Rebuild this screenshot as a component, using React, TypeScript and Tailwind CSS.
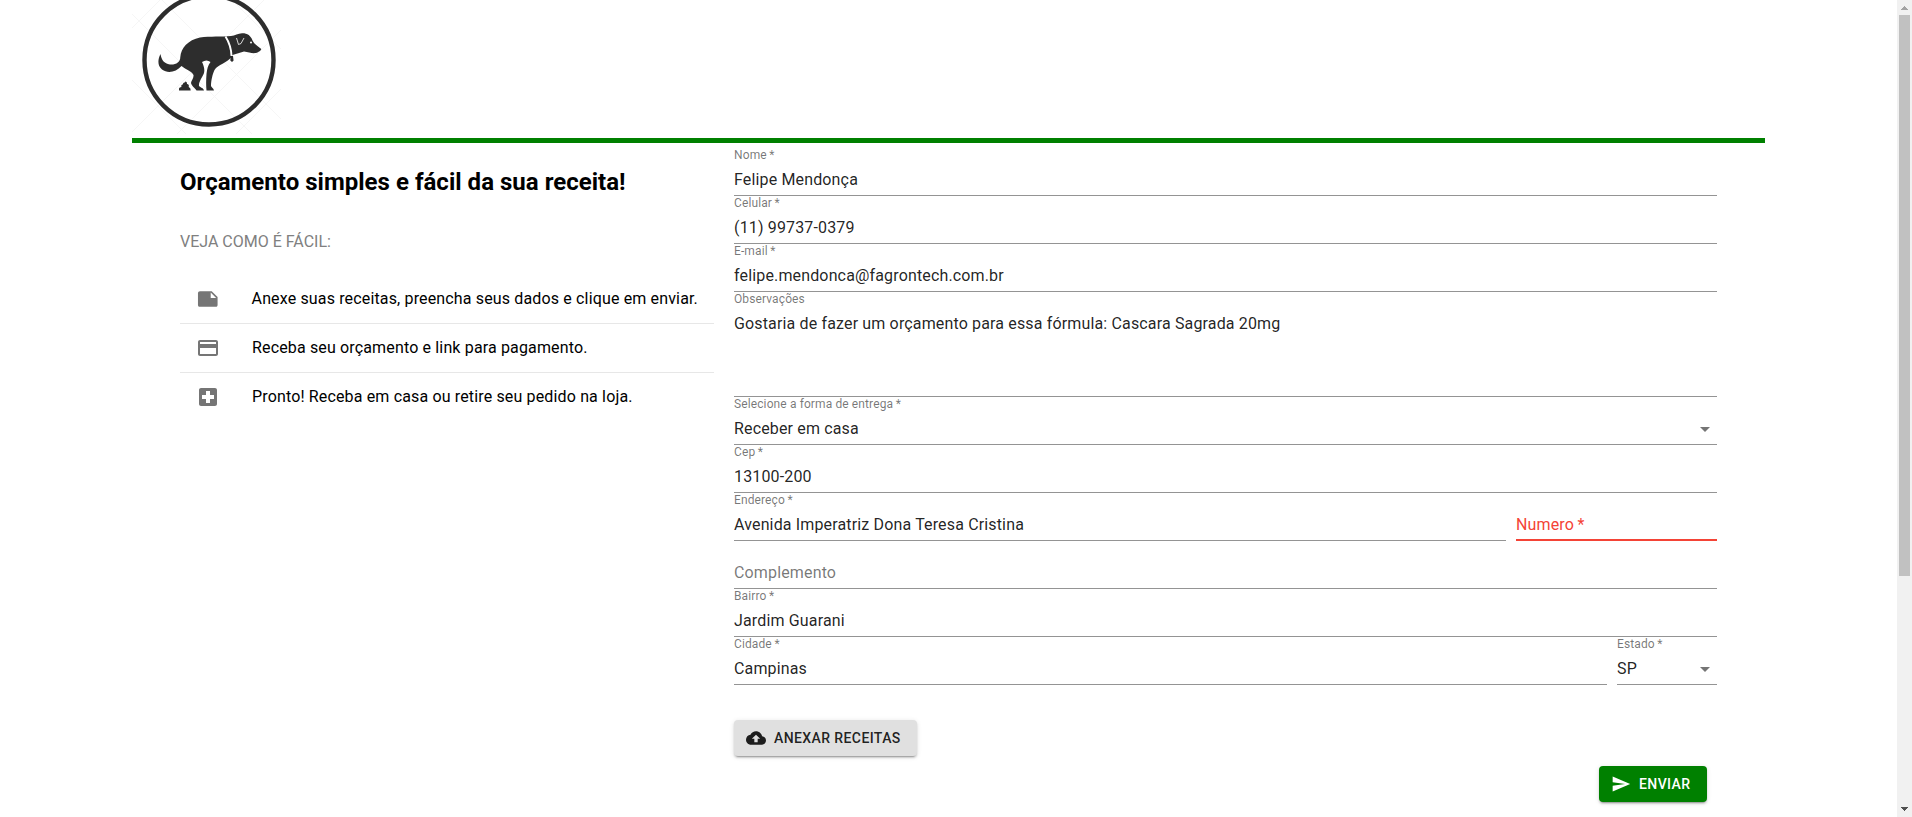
import React from "react";

const inputText = "text-[16px] leading-[19px] tracking-[0.00938em] text-black/87";

type FieldProps = {
  label: string;
  value?: string;
  className?: string;
  bodyClass?: string;
  select?: boolean;
  error?: boolean;
  required?: boolean;
};

function Field({ label, value, className = "", bodyClass = "h-8", select, error, required }: FieldProps) {
  const shrunk = value !== undefined;
  return (
    <div className={`relative flex flex-col pt-4 ${className}`}>
      <label
        className={`absolute left-0 top-0 origin-top-left whitespace-nowrap text-[16px] leading-4 tracking-[0.00938em] ${
          shrunk ? "translate-y-[1.5px] scale-75" : "translate-y-6"
        } ${error ? "text-[#f44336]" : "text-black/54"}`}
      >
        {label}
        {required && "\u2009*"}
      </label>
      <div
        className={`flex items-start justify-between pt-[6px] ${bodyClass} ${
          error ? "border-b-2 border-[#f44336]" : "border-b border-black/42"
        }`}
      >
        <span className={inputText}>{value}</span>
        {select && (
          <svg viewBox="0 0 24 24" className="-mt-[2px] size-6 fill-black/54">
            <path d="M7 10l5 5 5-5z" />
          </svg>
        )}
      </div>
    </div>
  );
}

const steps = [
  {
    text: "Anexe suas receitas, preencha seus dados e clique em enviar.",
    path: "M22 10l-6-6H4c-1.1 0-2 .9-2 2v12.01c0 1.1.9 1.99 2 1.99l16-.01c1.1 0 2-.89 2-1.99v-8zm-7-4.5l5.5 5.5H15V5.5z",
  },
  {
    text: "Receba seu orçamento e link para pagamento.",
    path: "M20 4H4c-1.11 0-1.99.89-1.99 2L2 18c0 1.11.89 2 2 2h16c1.11 0 2-.89 2-2V6c0-1.11-.89-2-2-2zm0 14H4v-6h16v6zm0-10H4V6h16v2z",
  },
  {
    text: "Pronto! Receba em casa ou retire seu pedido na loja.",
    path: "M19 3H5c-1.1 0-1.99.9-1.99 2L3 19c0 1.1.9 2 2 2h14c1.1 0 2-.9 2-2V5c0-1.1-.9-2-2-2zm-1 11h-4v4h-4v-4H6v-4h4V6h4v4h4v4z",
  },
];

function Logo() {
  return (
    <svg viewBox="0 0 150 138" className="h-[138px] w-[150px]">
      <g stroke="#f6f6f6" strokeWidth="1" fill="none">
        <path d="M0 28L28 0M0 132L132 0M45 134L149 30M104 134L149 89M0 14L120 134M30 0L149 119M100 0L149 49M0 80L54 134" />
      </g>
      <circle cx="77" cy="60" r="64.5" fill="none" stroke="#2d2d2d" strokeWidth="4.4" />
      <path
        fill="#2d2d2d"
        d="M28.5 54C25.5 60 25.500 66 30 69.500C36 74 44 72 49.500 66C54 70 60 71 61.500 75C62 78 59 81 59 83C59.500 86 63 88 64.500 90.500H72C71.500 88 68.500 87.500 67 86C66.500 82 70.500 77 72 73C73 69 71.500 65 70 62C73 60 76 60 78.500 62C76 65 75 69 74.500 74C74 80 74 86 74.500 90.500H82C81.500 88 79.500 87.500 79 86C79 81 80.500 74 82.500 70C86 64.500 95 63 99.500 57L100.500 55L112 51.500C117 52.500 121 53.800 125 52.800C127.500 51.500 129 50.500 129.300 49C126 46.500 122.500 44.500 120.500 40.500C119 35.500 115 33 110 33.200C106 33.500 103 35.500 99 36C90 37 78 36 68 37.500C56 40 49 48 48.300 57C48.300 62 44 65 38 64.500C32 63.500 29.500 60 28.500 54Z"
      />
      <path d="M93.500 36.500C97 42 99.200 48 99.500 56" fill="none" stroke="#fff" strokeWidth="1.900" />
      <path d="M104.500 38L106.500 44.500L109 43.500L112 38" fill="none" stroke="#fff" strokeWidth=".8" />
      <circle cx="119" cy="42.500" r="1" fill="#fff" />
      <path d="M98.500 56H101L101.600 60.500L100 62L98.300 60.500Z" fill="#2d2d2d" />
      <path d="M47 90.500V88.500Q47.200 87.300 49.500 87Q48.500 84.800 51 84.200Q50.700 82.500 52.500 82.500Q53.700 82.200 53.500 81.200Q55.500 82.500 55 84Q57.500 84.500 56.700 86.900Q58.800 87.500 58.700 90.500Z" fill="#2d2d2d" />
    </svg>
  );
}

export default function App() {
  return (
    <div className="flex h-[817px] w-full overflow-hidden bg-white font-[Roboto,sans-serif] text-black">
      <div className="flex-1">
        <main className="ml-[132px] w-[1633px]">
          <header className="h-[143px] border-b-[5px] border-[#008000]">
            <Logo />
          </header>
          <div className="flex pl-12 pt-[5px]">
            <section className="w-[534px]">
              <h2 className="mt-5 text-[24px] font-bold leading-7 tracking-[0.02px]">
                Orçamento simples e fácil da sua receita!
              </h2>
              <p className="mt-9 text-[16px] leading-[19px] text-[#808080]">VEJA COMO É FÁCIL:</p>
              <ul className="mt-6">
                {steps.map((step) => (
                  <li
                    key={step.text}
                    className="flex h-[49px] items-center border-b border-[#e7e7e7] px-4 last:h-12 last:border-b-0"
                  >
                    <svg viewBox="0 0 24 24" className="mr-8 size-6 fill-black/54">
                      <path d={step.path} />
                    </svg>
                    <span className="whitespace-nowrap text-[16px] leading-6 tracking-[0.00938em]">{step.text}</span>
                  </li>
                ))}
              </ul>
            </section>
            <form className="ml-5 w-[983px]">
              <Field label="Nome" required value="Felipe Mendonça" />
              <Field label="Celular" required value="(11) 99737-0379" />
              <Field label="E-mail" required value="felipe.mendonca@fagrontech.com.br" />
              <Field
                label="Observações"
                value="Gostaria de fazer um orçamento para essa fórmula: Cascara Sagrada 20mg"
                bodyClass="h-[89px]"
              />
              <Field label="Selecione a forma de entrega" required value="Receber em casa" select />
              <Field label="Cep" required value="13100-200" />
              <div className="flex gap-[10px]">
                <Field label="Endereço" required value="Avenida Imperatriz Dona Teresa Cristina" className="flex-1" />
                <Field label="Numero" required error className="w-[201px]" />
              </div>
              <Field label="Complemento" />
              <Field label="Bairro" required value="Jardim Guarani" />
              <div className="flex gap-[10px]">
                <Field label="Cidade" required value="Campinas" className="flex-1" />
                <Field label="Estado" required value="SP" select className="w-[100px]" />
              </div>
              <button
                type="button"
                className="mt-[35px] flex h-9 w-[183px] items-center rounded bg-[#e0e0e0] pl-3 text-[14px] font-medium tracking-[0.02857em] text-black/87 shadow-[0px_3px_1px_-2px_rgba(0,0,0,0.2),0px_2px_2px_0px_rgba(0,0,0,0.14),0px_1px_5px_0px_rgba(0,0,0,0.12)]"
              >
                <svg viewBox="0 0 24 24" className="mr-2 size-5 fill-current">
                  <path d="M19.35 10.04C18.67 6.59 15.64 4 12 4 9.11 4 6.6 5.64 5.35 8.04 2.34 8.36 0 10.91 0 14c0 3.31 2.69 6 6 6h13c2.76 0 5-2.24 5-5 0-2.64-2.05-4.78-4.65-4.96zM14 13v4h-4v-4H7l5-5 5 5h-3z" />
                </svg>
                ANEXAR RECEITAS
              </button>
              <div className="mt-[10px] flex justify-end pr-[10px]">
                <button
                  type="button"
                  className="flex h-9 w-[108px] items-center rounded bg-[#008000] pl-3 text-[14px] font-medium tracking-[0.02857em] text-white shadow-[0px_3px_1px_-2px_rgba(0,0,0,0.2),0px_2px_2px_0px_rgba(0,0,0,0.14),0px_1px_5px_0px_rgba(0,0,0,0.12)]"
                >
                  <svg viewBox="0 0 24 24" className="mr-2 size-5 fill-current">
                    <path d="M2.01 21L23 12 2.01 3 2 10l15 2-15 2z" />
                  </svg>
                  ENVIAR
                </button>
              </div>
            </form>
          </div>
        </main>
      </div>
      <aside className="flex w-[15px] flex-col items-center justify-between bg-[#f1f1f1]">
        <div className="flex flex-col items-center">
          <svg viewBox="0 0 15 15" className="size-[15px]" shapeRendering="crispEdges">
            <path d="M4 10V9H5V8H6V7H7V6H8V7H9V8H10V9H11V10Z" fill="#a3a3a3" />
          </svg>
          <div className="h-[561px] w-[11px] bg-[#c1c1c1]" />
        </div>
        <svg viewBox="0 0 15 15" className="size-[15px]" shapeRendering="crispEdges">
          <path d="M4 5V6H5V7H6V8H7V9H8V8H9V7H10V6H11V5Z" fill="#505050" />
        </svg>
      </aside>
    </div>
  );
}
